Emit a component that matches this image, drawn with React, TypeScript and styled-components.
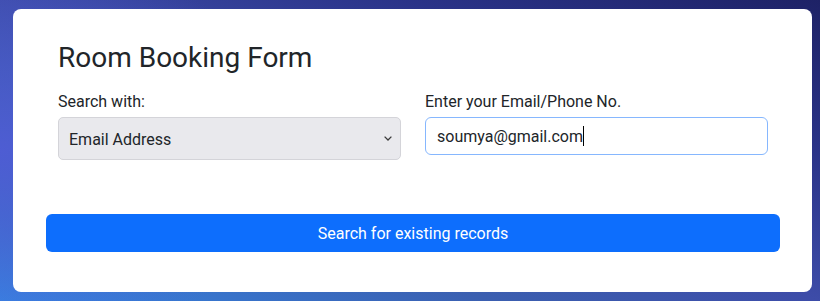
import styled, { createGlobalStyle } from 'styled-components';

const GlobalStyle = createGlobalStyle`
  html, body {
    margin: 0;
    padding: 0;
  }

  body {
    font-family: Roboto, 'Noto Sans', sans-serif;
    color: #212529;
  }
`;

export default function App() {
  return (
    <>
      <GlobalStyle />
      <Page>
        <Card>
          <FormSection>
            <Title>Room Booking Form</Title>
            <FieldRow>
              <Field>
                <Label htmlFor="searchType">Search with:</Label>
                <SelectWrap>
                  <Select id="searchType" defaultValue="email">
                    <option value="email">Email Address</option>
                    <option value="phone">Phone No.</option>
                  </Select>
                  <Chevron viewBox="0 0 8 5" aria-hidden="true">
                    <path d="M0.6 0.6 4 4 7.4 0.6" />
                  </Chevron>
                </SelectWrap>
              </Field>
              <Field>
                <Label as="span">Enter your Email/Phone No.</Label>
                <InputBox>
                  <InputText>soumya@gmail.com</InputText>
                  <Caret />
                </InputBox>
              </Field>
            </FieldRow>
          </FormSection>
          <SubmitButton type="button">Search for existing records</SubmitButton>
        </Card>
      </Page>
    </>
  );
}

const Page = styled.div`
  box-sizing: border-box;
  height: 301px;
  padding: 9px 8px 9px 13px;
  background:
    radial-gradient(ellipse 300px 200px at 0% 50%, rgba(80, 92, 214, 0.9), rgba(80, 92, 214, 0) 100%),
    linear-gradient(to top right, #3585e2 0%, #3b5fb0 30%, #3d4ca8 50%, #2a3388 75%, #1e2266 100%);
`;

const Card = styled.div`
  box-sizing: border-box;
  height: 100%;
  background: #fff;
  border-radius: 8px;
  padding: 0 32px 0 33px;
  display: flex;
  flex-direction: column;
`;

const FormSection = styled.div`
  padding: 32px 12px 0;
`;

const Title = styled.h2`
  margin: 0 0 15px;
  font-size: 28px;
  font-weight: 400;
  line-height: 1.2;
`;

const FieldRow = styled.div`
  display: grid;
  grid-template-columns: 1fr 1fr;
  column-gap: 24px;
  align-items: start;
`;

const Field = styled.div`
  display: flex;
  flex-direction: column;
`;

const Label = styled.label`
  font-size: 16px;
  line-height: 24px;
  margin-bottom: 3px;
`;

const SelectWrap = styled.div`
  position: relative;
`;

const Select = styled.select`
  appearance: none;
  width: 100%;
  height: 43px;
  box-sizing: border-box;
  padding: 2px 28px 0 10px;
  font: inherit;
  font-size: 16px;
  color: #212529;
  background: #e9e9ed;
  border: 1px solid #d4d4d9;
  border-radius: 5px;
  outline: none;
`;

const Chevron = styled.svg`
  position: absolute;
  right: 9px;
  top: 19px;
  width: 8px;
  height: 5px;
  fill: none;
  stroke: #3b3b3b;
  stroke-width: 1.3;
  pointer-events: none;
`;

const InputBox = styled.div`
  display: flex;
  align-items: center;
  height: 38px;
  box-sizing: border-box;
  padding: 1px 11px 0;
  background: #fff;
  border: 1px solid #86b7fe;
  border-radius: 6px;
`;

const InputText = styled.span`
  font-size: 16px;
  color: #212529;
  white-space: nowrap;
`;

const Caret = styled.span`
  width: 1px;
  height: 20px;
  background: #000;
`;

const SubmitButton = styled.button`
  margin-top: auto;
  margin-bottom: 40px;
  height: 38px;
  font: inherit;
  font-size: 16px;
  color: #fff;
  background: #0d6efd;
  border: none;
  border-radius: 6px;
  cursor: pointer;
`;
